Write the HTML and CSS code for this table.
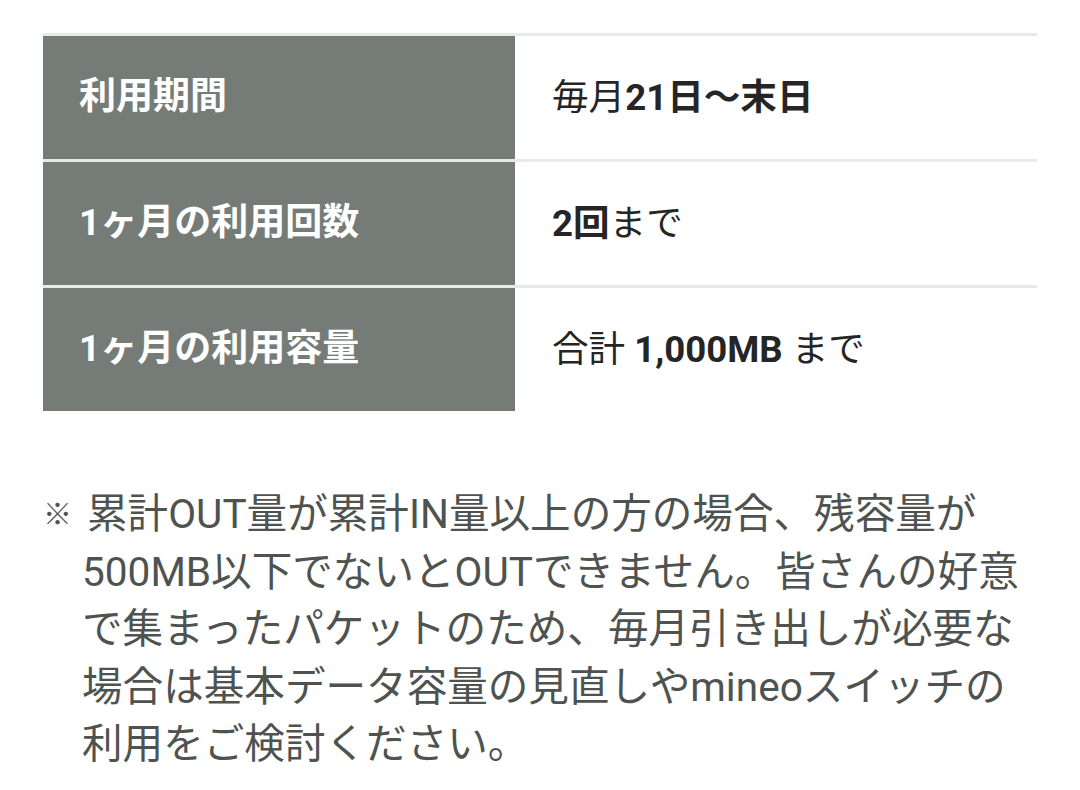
FILE: index.html
```html
<!DOCTYPE html>
<html lang="ja">
<head>
<meta charset="utf-8">
<link rel="stylesheet" href="styles.css">
</head>
<body>
<div class="page">
  <table class="spec">
    <tr>
      <th>利用期間</th>
      <td>毎月<b>21日〜末日</b></td>
    </tr>
    <tr>
      <th>1ヶ月の利用回数</th>
      <td><b>2回</b>まで</td>
    </tr>
    <tr>
      <th>1ヶ月の利用容量</th>
      <td>合計 <b>1,000MB</b> まで</td>
    </tr>
  </table>
  <p class="note"><span class="mark">※</span>累計OUT量が累計IN量以上の方の場合、残容量が<br>500MB以下でないとOUTできません。皆さんの好意<br>で集まったパケットのため、毎月引き出しが必要な<br>場合は基本データ容量の見直しやmineoスイッチの<br>利用をご検討ください。</p>
</div>
</body>
</html>
```

FILE: styles.css
```css
html, body {
  margin: 0;
  padding: 0;
  background: #ffffff;
}
body {
  font-family: Roboto, "Noto Sans CJK JP", sans-serif;
}
.page {
  padding: 33px 43px 0 43px;
}
.spec {
  width: 994px;
  border-collapse: collapse;
}
.spec tr {
  border-top: 3px solid #e6ebe8;
}
.spec th,
.spec td {
  height: 123px;
  padding: 0 0 0 36px;
  line-height: 1.2;
  text-align: left;
  vertical-align: middle;
}
.spec th {
  width: 436px;
  background: #757c77;
  color: #ffffff;
  font-size: 37px;
  font-weight: 700;
}
.spec td {
  color: #252525;
  font-size: 36.6px;
  font-weight: 400;
  padding-left: 37px;
}
.spec td b {
  font-weight: 700;
}
.note {
  margin: 75px 0 0 0;
  padding-left: 39px;
  text-indent: -39px;
  color: #4e5350;
  font-size: 40.6px;
  line-height: 57.5px;
  white-space: nowrap;
}
.mark {
  display: inline-block;
  width: 44px;
  text-indent: 0;
  font-size: 29px;
  line-height: 1;
  font-weight: 700;
  position: relative;
  top: -3px;
}
```
